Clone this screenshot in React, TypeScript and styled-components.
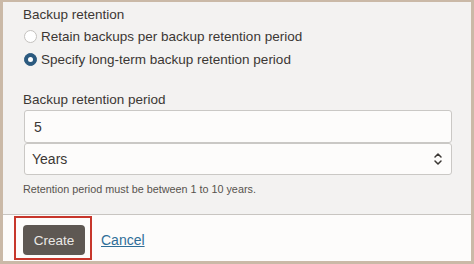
import styled, { createGlobalStyle } from "styled-components";

const GlobalStyle = createGlobalStyle`
  html, body {
    margin: 0;
    padding: 0;
    background: #ffffff;
  }
  * {
    box-sizing: border-box;
  }
`;

const Frame = styled.div`
  width: 474px;
  height: 264px;
  border-style: solid;
  border-color: #cab9a7;
  border-width: 2px 3px 3px 3px;
  display: flex;
  flex-direction: column;
  font-family: "Liberation Sans", Arial, sans-serif;
  color: #3b3734;
`;

const Body = styled.div`
  background: #f3f2f1;
  padding: 5px 19px 0 20px;
  height: 212px;
  display: flex;
  flex-direction: column;
`;

const GroupLabel = styled.div`
  font-size: 13.5px;
  line-height: 16px;
  height: 16px;
`;

const RadioRow = styled.label<{ $first?: boolean }>`
  display: flex;
  align-items: center;
  gap: 4px;
  height: 23px;
  font-size: 13.5px;
  padding-left: 1px;
  margin-top: ${(p) => (p.$first ? "2px" : "0")};
`;

const RadioDot = styled.span<{ $checked?: boolean }>`
  width: 13px;
  height: 13px;
  border-radius: 50%;
  flex-shrink: 0;
  background: ${(p) => (p.$checked ? "#2b5a7f" : "#ffffff")};
  border: 1px solid ${(p) => (p.$checked ? "#2b5a7f" : "#c4c2bf")};
  display: flex;
  align-items: center;
  justify-content: center;

  &::after {
    content: "";
    display: ${(p) => (p.$checked ? "block" : "none")};
    width: 5px;
    height: 5px;
    border-radius: 50%;
    background: #ffffff;
  }
`;

const FieldLabel = styled.div`
  font-size: 13.5px;
  line-height: 16px;
  margin-top: 21px;
  margin-bottom: 2px;
`;

const TextInput = styled.div`
  height: 33px;
  border: 1px solid #cac8c5;
  border-radius: 3px;
  background: #fdfcfb;
  display: flex;
  align-items: center;
  padding-left: 9px;
  font-size: 14px;
  margin-left: 1px;
`;

const SelectBox = styled.div`
  height: 32px;
  border: 1px solid #cac8c5;
  border-radius: 3px;
  background: #fdfcfb;
  display: flex;
  align-items: center;
  justify-content: space-between;
  padding: 0 8px 0 7px;
  font-size: 14px;
  margin-left: 1px;
`;

const HelpText = styled.div`
  font-size: 10.8px;
  line-height: 13px;
  color: #57524e;
  margin-top: 8px;
`;

const Footer = styled.div`
  flex: 1;
  background: #fdfcfb;
  border-top: 1px solid #c8c5c1;
  padding: 1px 0 0 11px;
  display: flex;
  align-items: flex-start;
  gap: 9px;
`;

const Highlight = styled.div`
  border: 2px solid #c7362b;
  padding: 7px 5px 3px 7px;
`;

const PrimaryButton = styled.button`
  width: 62px;
  height: 30px;
  border: none;
  border-radius: 4px;
  background: #5e5853;
  color: #ebe9e7;
  font-family: "Liberation Sans", Arial, sans-serif;
  font-size: 13.5px;
  padding: 0;
`;

const CancelLink = styled.a`
  margin-top: 16px;
  font-size: 14px;
  color: #2f6e98;
  text-decoration: underline;
`;

function Chevrons() {
  return (
    <svg width="10" height="14" viewBox="0 0 10 14" fill="none">
      <path d="M2 5 L5 2 L8 5" stroke="#3b3734" strokeWidth="1.5" strokeLinecap="round" strokeLinejoin="round" />
      <path d="M2 9 L5 12 L8 9" stroke="#3b3734" strokeWidth="1.5" strokeLinecap="round" strokeLinejoin="round" />
    </svg>
  );
}

export default function App() {
  return (
    <>
      <GlobalStyle />
      <Frame>
        <Body>
          <GroupLabel>Backup retention</GroupLabel>
          <RadioRow $first>
            <RadioDot />
            Retain backups per backup retention period
          </RadioRow>
          <RadioRow>
            <RadioDot $checked />
            Specify long-term backup retention period
          </RadioRow>
          <FieldLabel>Backup retention period</FieldLabel>
          <TextInput>5</TextInput>
          <SelectBox>
            Years
            <Chevrons />
          </SelectBox>
          <HelpText>Retention period must be between 1 to 10 years.</HelpText>
        </Body>
        <Footer>
          <Highlight>
            <PrimaryButton>Create</PrimaryButton>
          </Highlight>
          <CancelLink href="#">Cancel</CancelLink>
        </Footer>
      </Frame>
    </>
  );
}
